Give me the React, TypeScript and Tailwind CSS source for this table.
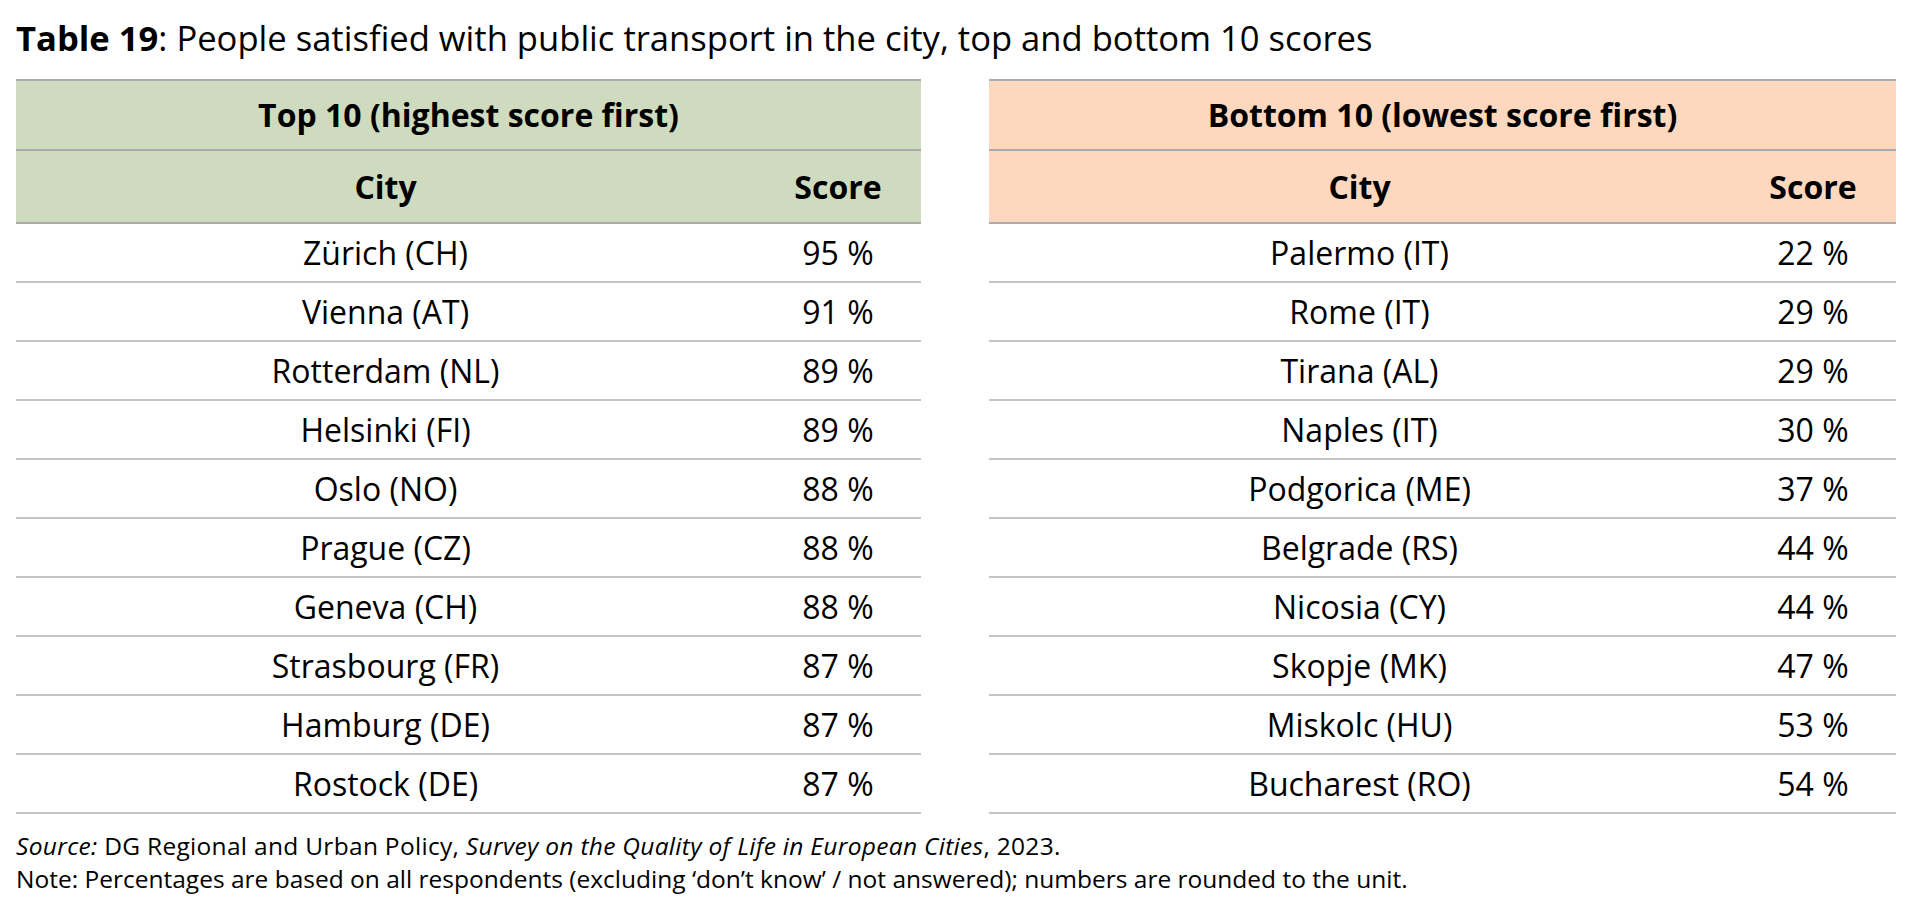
import React from 'react';

type Row = { city: string; score: string };

const top10: Row[] = [
    { city: 'Zürich (CH)', score: '95 %' },
    { city: 'Vienna (AT)', score: '91 %' },
    { city: 'Rotterdam (NL)', score: '89 %' },
    { city: 'Helsinki (FI)', score: '89 %' },
    { city: 'Oslo (NO)', score: '88 %' },
    { city: 'Prague (CZ)', score: '88 %' },
    { city: 'Geneva (CH)', score: '88 %' },
    { city: 'Strasbourg (FR)', score: '87 %' },
    { city: 'Hamburg (DE)', score: '87 %' },
    { city: 'Rostock (DE)', score: '87 %' },
];

const bottom10: Row[] = [
    { city: 'Palermo (IT)', score: '22 %' },
    { city: 'Rome (IT)', score: '29 %' },
    { city: 'Tirana (AL)', score: '29 %' },
    { city: 'Naples (IT)', score: '30 %' },
    { city: 'Podgorica (ME)', score: '37 %' },
    { city: 'Belgrade (RS)', score: '44 %' },
    { city: 'Nicosia (CY)', score: '44 %' },
    { city: 'Skopje (MK)', score: '47 %' },
    { city: 'Miskolc (HU)', score: '53 %' },
    { city: 'Bucharest (RO)', score: '54 %' },
];

interface ScoreTableProps {
    title: string;
    rows: Row[];
    headBg: string;
    cols: string;
    width: string;
}

const ScoreTable: React.FC<ScoreTableProps> = ({ title, rows, headBg, cols, width }) => {
    return (
        <div className={`${width} border-t-2 border-[#ababab]`}>
            <div className={`${headBg} h-[70px] flex items-center justify-center border-b-2 border-[#ababab] font-bold text-[32px]`}>
                {title}
            </div>
            <div className={`${headBg} ${cols} grid h-[73px] items-center border-b-2 border-[#ababab] font-bold text-[32px]`}>
                <div className="text-center">City</div>
                <div className="text-center">Score</div>
            </div>
            {rows.map((row) => (
                <div key={row.city} className={`${cols} grid h-[59px] items-center border-b-2 border-[#c4c4c4] text-[32px]`}>
                    <div className="text-center">{row.city}</div>
                    <div className="text-center">{row.score}</div>
                </div>
            ))}
        </div>
    );
}

export default function App() {
    return (
        <div className="w-[1908px] h-[918px] bg-white text-black px-[16px] pt-[18px] font-['Open_Sans',sans-serif]">
            <h1 className="text-[34.6px] leading-[40px] mb-[21px]">
                <span className="font-bold">Table 19</span>: People satisfied with public transport in the city, top and bottom 10 scores
            </h1>
            <div className="flex gap-[68px]">
                <ScoreTable
                    title="Top 10 (highest score first)"
                    rows={top10}
                    headBg="bg-[#cedbbe]"
                    cols="grid-cols-[739px_166px]"
                    width="w-[905px]"
                />
                <ScoreTable
                    title="Bottom 10 (lowest score first)"
                    rows={bottom10}
                    headBg="bg-[#fdd7be]"
                    cols="grid-cols-[741px_166px]"
                    width="w-[907px]"
                />
            </div>
            <div className="mt-[15px] text-[24.5px] leading-[33px]">
                <p className="tracking-[0.3px]">
                    <i>Source:</i> DG Regional and Urban Policy, <i>Survey on the Quality of Life in European Cities</i>, 2023.
                </p>
                <p>
                    Note: Percentages are based on all respondents (excluding ‘don’t know’ / not answered); numbers are rounded to the unit.
                </p>
            </div>
        </div>
    );
}
